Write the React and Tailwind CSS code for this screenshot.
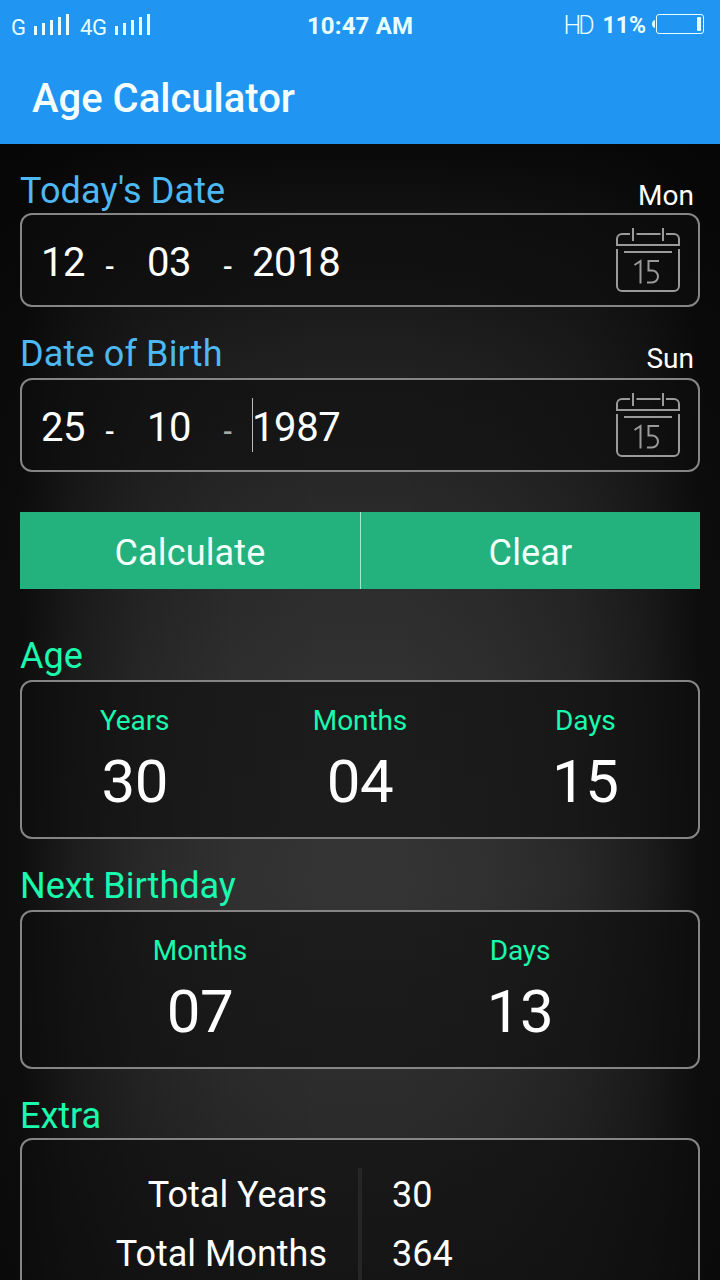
import React, { useState } from "react";

const today = { day: "12", month: "03", year: "2018", weekday: "Mon" };
const birth = { day: "25", month: "10", year: "1987", weekday: "Sun" };

const age = [
  { label: "Years", value: "30" },
  { label: "Months", value: "04" },
  { label: "Days", value: "15" },
];

const nextBirthday = [
  { label: "Months", value: "07" },
  { label: "Days", value: "13" },
];

const extra = [
  { label: "Total Years", value: "30" },
  { label: "Total Months", value: "364" },
];

const SignalIcon = () => (
  <svg width="37" height="22" viewBox="0 0 37 22" fill="currentColor">
    <rect x="1" y="12" width="3" height="9" />
    <rect x="9" y="9" width="3" height="12" />
    <rect x="17" y="6" width="3" height="15" />
    <rect x="25" y="3" width="3" height="18" />
    <rect x="33" y="0" width="3" height="21" />
  </svg>
);

const BatteryIcon = () => (
  <svg width="53" height="20" viewBox="0 0 53 20" fill="none">
    <path d="M3 6C1 6.500 0 8 0 10s1 3.500 3 4z" fill="currentColor" />
    <rect x="4.500" y="0.500" width="47" height="19" rx="2.500" stroke="currentColor" />
    <rect x="45" y="3" width="4" height="14" rx="1" fill="currentColor" />
  </svg>
);

const CalendarIcon = () => (
  <svg
    width="66"
    height="66"
    viewBox="0 0 66 66"
    fill="none"
    stroke="#9a9a9a"
    strokeWidth="2"
  >
    <path d="M15 7H7a5 5 0 0 0-5 5V18H64V12a5 5 0 0 0-5-5H51M21.500 7H45.500" />
    <path d="M18 1V14M48 1V14" />
    <path d="M2 22V59a5 5 0 0 0 5 5H59a5 5 0 0 0 5-5V22" />
    <path d="M9 25H57" />
    <path d="M19.500 38l6-4V56.500M44 34H33.500V43.500h3.500a6 6 0 0 1 0 12H32" />
  </svg>
);

const StatusBar = () => (
  <div className="grid h-[50px] grid-cols-3 items-center text-[#e8ffff]">
    <div className="flex items-center pl-[11px] pt-[3px] text-[22px] leading-none">
      <span className="w-[22px] pt-[2px]">G</span>
      <div className="-mt-[3px]">
        <SignalIcon />
      </div>
      <span className="ml-[10px] w-[34px] pt-[2px] tracking-[-0.4px]">4G</span>
      <div className="-mt-[3px]">
        <SignalIcon />
      </div>
    </div>
    <div className="pt-px text-center text-2xl font-bold tracking-[0.15px]">10:47 AM</div>
    <div className="flex items-center justify-end pr-[15px]">
      <span className="mr-[8px] text-[25px] leading-none font-light tracking-[-3px]">HD</span>
      <span className="mr-[6px] ml-[3px] pt-[2px] text-[23px] font-bold">11%</span>
      <div className="-mt-[2px]">
        <BatteryIcon />
      </div>
    </div>
  </div>
);

const DateField = ({ date, focused }) => (
  <div className="flex h-[94px] items-center justify-between rounded-xl border-2 border-[#858585] bg-[#0e0e0e]/60 pr-[17px] pl-[19px]">
    <div className="flex items-center pt-[6px] text-[40px] leading-[52px] tracking-[-0.4px] text-white">
      <span className="w-[64px]">{date.day}</span>
      <span className="w-[42px] pt-[7px] text-[28px] font-medium">-</span>
      <span className="w-[76px]">{date.month}</span>
      <span
        className={`w-[29px] pt-[7px] text-[28px] font-medium ${focused ? "text-[#aaaaaa]" : ""}`}
      >
        -
      </span>
      <span className="relative">
        {focused && <i className="absolute -top-[4px] left-0 h-[54px] w-px bg-[#bbbbbb]" />}
        {date.year}
      </span>
    </div>
    <CalendarIcon />
  </div>
);

const DateSection = ({ title, date, focused }) => (
  <>
    <div className="flex h-[42px] items-end justify-between pr-[6px]">
      <h2 className="text-4xl leading-[42px] tracking-[0.14px] text-[#4db8f4]">{title}</h2>
      <span className="h-[33px] text-[28px] leading-[34px] text-white">{date.weekday}</span>
    </div>
    <div className={focused ? "pt-[3px]" : "pt-px"}>
      <DateField date={date} focused={focused} />
    </div>
  </>
);

const ResultSection = ({ title, children }) => (
  <section>
    <h2 className="h-[42px] text-4xl leading-[42px] text-[#1afaae]">{title}</h2>
    {children}
  </section>
);

const ResultCard = ({ items, className }) => (
  <div
    className={`mt-[3px] flex h-[159px] rounded-xl border-2 border-[#858585] bg-[#0e0e0e]/60 pt-[22px] ${className}`}
  >
    {items.map((item) => (
      <div key={item.label} className="flex-1 text-center">
        <div className="text-[28px] leading-[33px] tracking-[-0.1px] text-[#1afaae]">
          {item.label}
        </div>
        <div className="pt-[10px] text-[60px] leading-[70px] tracking-[-0.5px] text-white">
          {item.value}
        </div>
      </div>
    ))}
  </div>
);

const App = () => {
  const [results] = useState({ age, nextBirthday, extra });

  return (
    <div className="flex h-[1280px] w-[720px] flex-col overflow-hidden bg-black font-['Roboto',sans-serif]">
      <header className="h-36 shrink-0 bg-[#2095f2]">
        <StatusBar />
        <h1 className="pt-[23px] pl-8 text-[40px] leading-[52px] font-medium text-[#f6ffff]">
          Age Calculator
        </h1>
      </header>

      {/* dark vignette: side shading over a vertical glow */}
      <main className="flex-1 bg-[linear-gradient(to_right,rgba(5,5,5,0.82)_0%,rgba(5,5,5,0.8)_3%,rgba(5,5,5,0.5)_10%,rgba(5,5,5,0.24)_20%,rgba(5,5,5,0.08)_32%,rgba(5,5,5,0)_45%,rgba(5,5,5,0)_55%,rgba(5,5,5,0.08)_68%,rgba(5,5,5,0.24)_80%,rgba(5,5,5,0.5)_90%,rgba(5,5,5,0.8)_97%,rgba(5,5,5,0.82)_100%),linear-gradient(to_bottom,#090909_0%,#121212_6%,#1f1f1f_17%,#2a2a2a_31%,#313131_45%,#343434_62%,#2a2a2a_84%,#1e1e1e_100%)] px-5 pt-[26px]">
        <DateSection title="Today's Date" date={today} />
        <div className="h-[26px]" />
        <DateSection title="Date of Birth" date={birth} focused />

        <div className="mt-10 mb-[46px] grid h-[77px] grid-cols-2 bg-[#23b17d] text-4xl tracking-[0.14px] text-[#f2fffa]">
          <button className="pt-1">Calculate</button>
          <button className="border-l border-[#a5e8cd] pt-1">Clear</button>
        </div>

        <ResultSection title="Age">
          <ResultCard items={results.age} />
        </ResultSection>

        <div className="mt-[26px]">
          <ResultSection title="Next Birthday">
            <ResultCard items={results.nextBirthday} className="px-[18px]" />
          </ResultSection>
        </div>

        <div className="mt-[26px]">
          <ResultSection title="Extra">
            <div className="mt-px h-[200px] rounded-xl border-2 border-[#858585] bg-[#0e0e0e]/60 pt-7">
              {results.extra.map((row) => (
                <div
                  key={row.label}
                  className="grid h-[59px] grid-cols-2 text-4xl leading-[54px] text-white"
                >
                  <span className="border-r-2 border-[#262626] pr-[31px] text-right">
                    {row.label}
                  </span>
                  <span className="border-l-2 border-[#262626] pl-[30px]">{row.value}</span>
                </div>
              ))}
            </div>
          </ResultSection>
        </div>
      </main>
    </div>
  );
};

export default App;
